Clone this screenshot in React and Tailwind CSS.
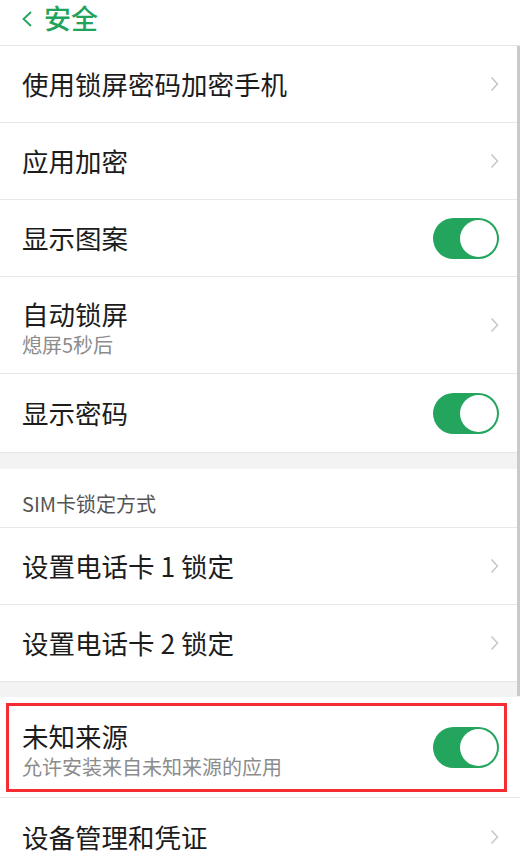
const font = { fontFamily: '"Noto Sans CJK SC", "Noto Sans", sans-serif' };

function Chevron() {
    return (
        <svg width="9" height="16" viewBox="0 0 9 16" className="shrink-0">
            <path d="M1.5 1.5 L7.5 8 L1.5 14.5" fill="none" stroke="#c4c4c4" strokeWidth="1.4" />
        </svg>
    );
}

function Toggle() {
    return (
        <div className="w-[66px] h-[41px] rounded-full bg-[#24a55e] flex items-center justify-end pr-[2px] shrink-0">
            <div className="w-[37px] h-[37px] rounded-full bg-white" />
        </div>
    );
}

function Row({ title, subtitle, right, height = "h-[77px]", border = true }) {
    return (
        <div
            className={`${height} flex items-center justify-between pl-[22px] pr-[21px] bg-white ${
                border ? "border-b border-[#e8e8e8]" : ""
            }`}
        >
            <div className={`flex flex-col ${subtitle ? "pt-[3px]" : ""}`}>
                <span className="text-[26.5px] leading-[36px] text-[#1c1c1c]">{title}</span>
                {subtitle && (
                    <span className="text-[20px] leading-[26px] text-[#8c8c8c]">{subtitle}</span>
                )}
            </div>
            {right === "toggle" ? <Toggle /> : <Chevron />}
        </div>
    );
}

function Gap({ height }) {
    return <div className={`${height} bg-[#f3f3f3] border-t border-[#e6e6e6]`} />;
}

export default function App() {
    return (
        <div className="relative w-[520px] h-[863px] overflow-hidden bg-white" style={font}>
            <div className="h-[46px] flex items-start pl-[21px] gap-[11px] border-b border-[#e6e6e6]">
                <svg width="12" height="16" viewBox="0 0 12 16" className="shrink-0 mt-[11px]">
                    <path d="M10 1 L2.5 8 L10 15" fill="none" stroke="#22a35c" strokeWidth="1.8" />
                </svg>
                <span className="text-[27px] leading-[36px] font-medium text-[#22a35c]">安全</span>
            </div>

            <Row title="使用锁屏密码加密手机" height="h-[77px]" />
            <Row title="应用加密" height="h-[77px]" />
            <Row title="显示图案" right="toggle" height="h-[77px]" />
            <Row title="自动锁屏" subtitle="熄屏5秒后" height="h-[97px]" />
            <Row title="显示密码" right="toggle" height="h-[78px]" border={false} />

            <Gap height="h-[17px]" />

            <div className="h-[59px] flex items-center pl-[22px] border-b border-[#e8e8e8]">
                <span className="text-[20px] text-[#555555] pt-[12px]">SIM卡锁定方式</span>
            </div>

            <Row title="设置电话卡 1 锁定" height="h-[77px]" />
            <Row title="设置电话卡 2 锁定" height="h-[76px]" border={false} />

            <Gap height="h-[16px]" />

            <div className="relative">
                <Row title="未知来源" subtitle="允许安装来自未知来源的应用" right="toggle" height="h-[101px]" />
                <div className="absolute left-[6px] right-[13px] top-[6px] bottom-[6px] border-[3px] border-[#f52d33]" />
            </div>

            <Row title="设备管理和凭证" height="h-[77px]" border={false} />

            <div className="absolute right-0 top-[46px] w-[3px] h-[650px] bg-[#cacaca]" />
        </div>
    );
}
